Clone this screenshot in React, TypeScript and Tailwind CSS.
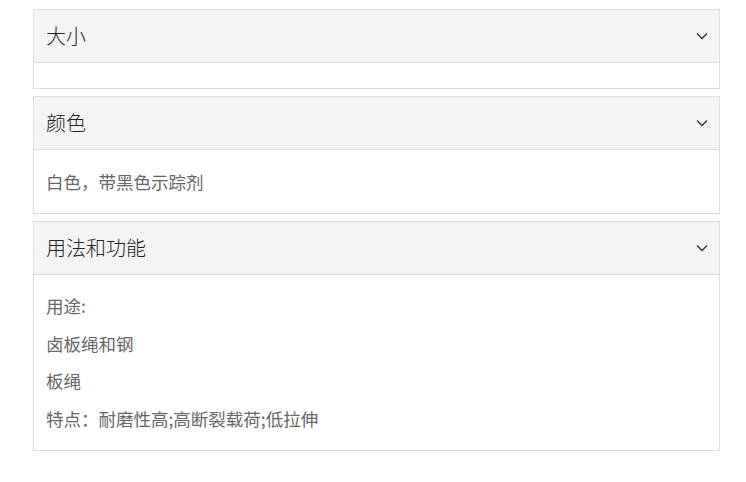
import React from "react";

interface Section {
  title: string;
  lines: string[];
}

const sections: Section[] = [
  { title: "大小", lines: [] },
  { title: "颜色", lines: ["白色，带黑色示踪剂"] },
  {
    title: "用法和功能",
    lines: ["用途:", "卤板绳和钢", "板绳", "特点：耐磨性高;高断裂载荷;低拉伸"],
  },
];

function Chevron() {
  return (
    <svg width="12" height="8" viewBox="0 0 12 8" fill="none" className="shrink-0">
      <path d="M1 1.5L6 6.5L11 1.5" stroke="#333333" strokeWidth="1.4" />
    </svg>
  );
}

function Panel({ section }: { section: Section }) {
  return (
    <div className="border border-[#dddddd] bg-white">
      <div className="h-[53px] bg-[#f4f4f4] border-b border-[#dddddd] flex items-center justify-between pl-3 pr-[11px]">
        <span className="text-[20px] font-light text-[#222222]">{section.title}</span>
        <Chevron />
      </div>
      {section.lines.length === 0 ? (
        <div className="h-[25px]"></div>
      ) : (
        <div className="px-3 py-[12.5px]">
          {section.lines.map((line, i) => (
            <p key={i} className="text-[17.5px] leading-[37.5px] text-[#666666]">
              {line}
            </p>
          ))}
        </div>
      )}
    </div>
  );
}

export default function App() {
  return (
    <div
      className="w-[746px] h-[482px] bg-white pt-[9px] pl-[33px]"
      style={{ fontFamily: '"Noto Sans CJK SC", "Noto Sans", sans-serif' }}
    >
      <div className="w-[687px] flex flex-col gap-[7px]">
        {sections.map((s) => (
          <Panel key={s.title} section={s} />
        ))}
      </div>
    </div>
  );
}
